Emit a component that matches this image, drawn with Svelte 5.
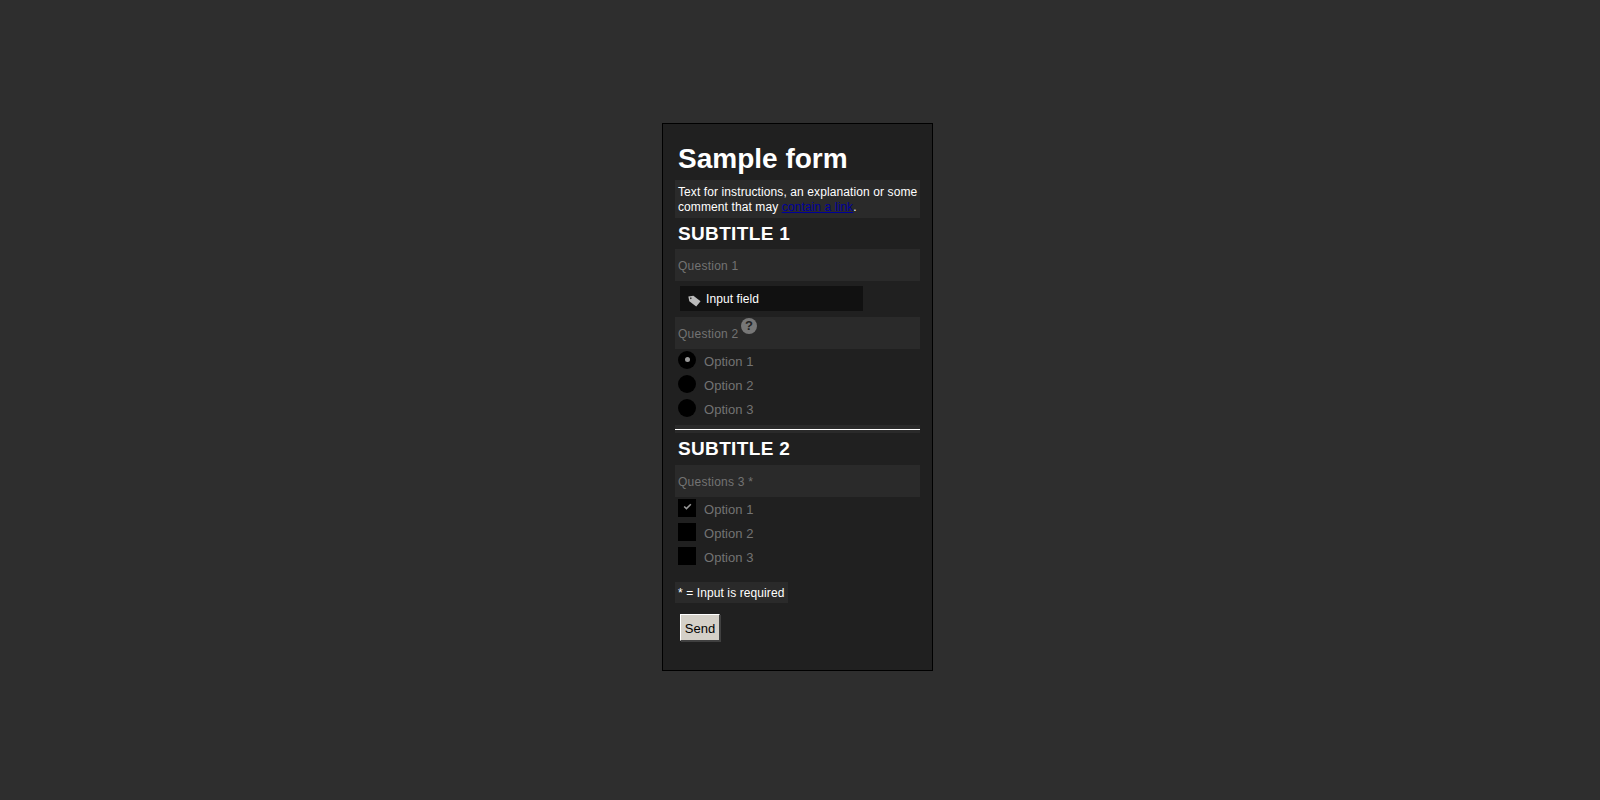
<script>
  const radios = ['Option 1', 'Option 2', 'Option 3'];
  const checks = ['Option 1', 'Option 2', 'Option 3'];
</script>

<main class="page">
  <form class="card" onsubmit={(e) => e.preventDefault()}>
    <h1>Sample form</h1>
    <p class="note intro">Text for instructions, an explanation or some comment that may <a href="#top">contain a link</a>.</p>
    <h2>SUBTITLE 1</h2>
    <div class="question">Question 1</div>
    <div class="input">
      <svg viewBox="0 0 12 12" width="13" height="13" aria-hidden="true"><path d="M0.3 2.2 L5 1.6 L11.6 6.6 L7.6 11.6 L1.2 6.6 Z M2.6 3.2 a0.7 0.7 0 1 0 0.01 0 Z" fill="#bbb" fill-rule="evenodd"/></svg>
      <span>Input field</span>
    </div>
    <div class="question q2">
      <span>Question 2</span>
      <span class="help">?</span>
    </div>
    <div class="options">
      {#each radios as label, i}
        <div class="option">
          <span class="radio">{#if i === 0}<span class="dot"></span>{/if}</span>
          <span class="label">{label}</span>
        </div>
      {/each}
    </div>
    <div class="rule"><div class="line"></div></div>
    <h2 class="second">SUBTITLE 2</h2>
    <div class="question">Questions 3 *</div>
    <div class="options">
      {#each checks as label, i}
        <div class="option">
          <span class="check">
            {#if i === 0}
              <svg viewBox="0 0 10 8" width="9" height="7" aria-hidden="true"><path d="M1.2 4 L3.8 6.4 L8.8 1.4" fill="none" stroke="#999" stroke-width="1.8"/></svg>
            {/if}
          </span>
          <span class="label">{label}</span>
        </div>
      {/each}
    </div>
    <p class="note required">* = Input is required</p>
    <button type="submit">Send</button>
  </form>
</main>

<style>
  :global(body) {
    margin: 0;
    background: #2e2e2e;
  }
  .page {
    min-height: 800px;
    display: flex;
    justify-content: center;
    align-items: flex-start;
    padding: 123px 5px 0 0;
    box-sizing: border-box;
  }
  .card {
    width: 271px;
    height: 548px;
    box-sizing: border-box;
    padding: 0 12px;
    border: 1px solid #000;
    background: #202020;
    font-family: "Liberation Sans", Arial, sans-serif;
    font-size: 12px;
    color: #fff;
    display: flex;
    flex-direction: column;
    align-items: stretch;
  }
  h1 {
    margin: 19px 0 0 3px;
    font-size: 28px;
    line-height: 32px;
    font-weight: bold;
    color: #fff;
    height: 37px;
  }
  h2 {
    margin: 3px 0 0 3px;
    font-size: 19px;
    line-height: 26px;
    height: 28px;
    font-weight: bold;
    color: #fff;
    letter-spacing: 0.35px;
  }
  .second {
    margin-top: 4px;
    line-height: 24px;
  }
  .note {
    margin: 0;
    padding: 5px 0 3px 3px;
    background: #2a2a2a;
    line-height: 15px;
    letter-spacing: 0.1px;
  }
  .intro {
    height: 38px;
    box-sizing: border-box;
  }
  a {
    color: #00009a;
  }
  .question {
    height: 32px;
    background: #2a2a2a;
    color: #737373;
    padding: 2px 3px 0;
    display: flex;
    align-items: center;
    box-sizing: border-box;
    letter-spacing: 0.25px;
  }
  .q2 {
    align-items: flex-end;
    padding-bottom: 8px;
    position: relative;
  }
  .help {
    position: absolute;
    left: 66px;
    top: 1px;
    width: 16px;
    height: 16px;
    border-radius: 50%;
    background: #777;
    color: #222;
    font-size: 13px;
    font-weight: bold;
    line-height: 16px;
    text-align: center;
    letter-spacing: 0;
  }
  .input {
    margin: 5px 0 6px 5px;
    width: 183px;
    height: 25px;
    background: #111;
    display: flex;
    align-items: center;
    gap: 5px;
    padding-left: 8px;
    box-sizing: border-box;
    letter-spacing: 0.1px;
  }
  .input svg {
    margin-top: 3px;
  }
  .options {
    display: flex;
    flex-direction: column;
    gap: 6px;
    margin: 2px 0 0 3px;
  }
  .option {
    height: 18px;
    display: flex;
    align-items: flex-start;
    gap: 8px;
  }
  .label {
    color: #737373;
    font-size: 13px;
    line-height: 21px;
    letter-spacing: 0.05px;
  }
  .radio,
  .check {
    width: 18px;
    height: 18px;
    background: #000;
    display: flex;
    align-items: center;
    justify-content: center;
    flex: none;
  }
  .radio {
    border-radius: 50%;
  }
  .dot {
    width: 5px;
    height: 5px;
    border-radius: 50%;
    background: #999;
    margin-bottom: 2px;
  }
  .check svg {
    margin-bottom: 3px;
  }
  .rule {
    margin-top: 8px;
    height: 8px;
    background: #2a2a2a;
    display: flex;
    align-items: center;
  }
  .line {
    width: 100%;
    height: 1px;
    background: #fff;
  }
  .required {
    margin-top: 17px;
    align-self: flex-start;
    height: 21px;
    box-sizing: border-box;
    padding: 4px 3px 2px;
    line-height: 15px;
    letter-spacing: 0.1px;
  }
  button {
    margin: 11px 0 0 5px;
    width: 40px;
    height: 27px;
    align-self: flex-start;
    padding: 2px 0 0;
    background: #d4d0c8;
    color: #000;
    font: 13px "Liberation Sans", Arial, sans-serif;
    border: 1px solid;
    border-color: #fff #404040 #404040 #fff;
    box-shadow: 1px 1px 0 #404040;
  }
</style>
